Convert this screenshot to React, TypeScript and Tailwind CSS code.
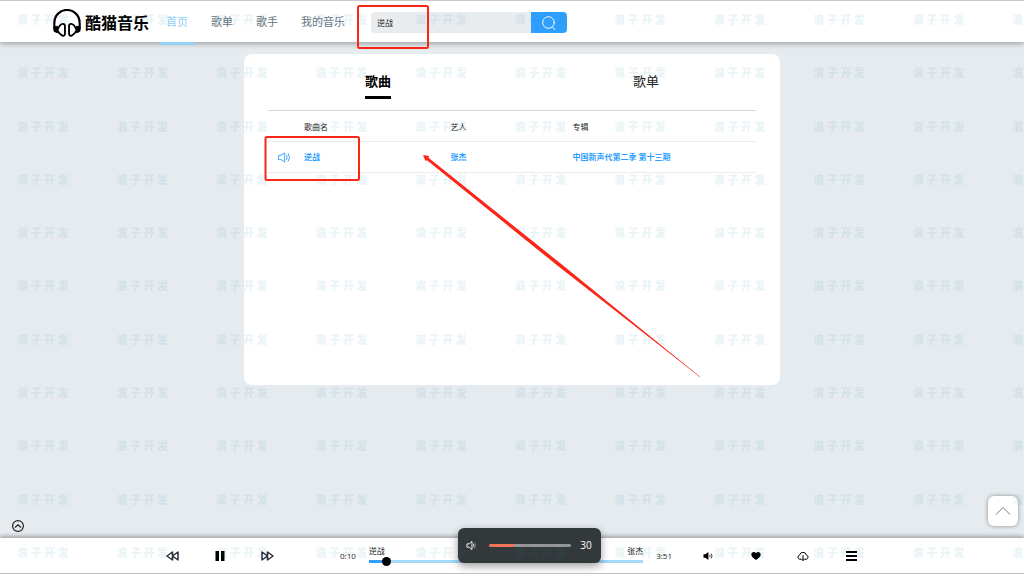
import { useState } from "react";
import type { ReactNode } from "react";

interface Song {
  id: number;
  name: string;
  artist: string;
  album: string;
}

const navItems = ["首页", "歌单", "歌手", "我的音乐"];

const songs: Song[] = [
  { id: 1, name: "逆战", artist: "张杰", album: "中国新声代第二季 第十三期" },
];

function Logo() {
  return (
    <svg viewBox="0 0 30 30" className="h-7 w-7" fill="none" stroke="#000" strokeLinejoin="round">
      <path d="M1.800 22C1.300 19 1.300 17 1.500 14.500A13.300 13.300 0 0 1 28.500 14.500C28.700 17 28.700 19 28.200 22" strokeWidth="2.300" />
      <path d="M0.800 19 4.800 18.500V25.500L1.200 24Z M29.200 19 25.200 18.500V25.500L28.800 24Z" fill="#000" />
      <path d="M5 22C6.500 18.500 8.500 16 10.500 16C12.200 16 12.800 17 12.800 18.500V26.500C12.800 28.500 11.500 29 10 28.500C7.800 27.500 6 25.500 5 23.500Z" strokeWidth="2" />
      <path d="M25 22C23.500 18.500 21.500 16 19.500 16C17.800 16 17.200 17 17.200 18.500V26.500C17.200 28.500 18.500 29 20 28.500C22.200 27.500 24 25.500 25 23.500Z" strokeWidth="2" />
    </svg>
  );
}

function SpeakerIcon({ className }: { className: string }) {
  return (
    <svg viewBox="0 0 14 12" className={className} fill="none" stroke="currentColor" strokeLinejoin="round" strokeLinecap="round">
      <path d="M1 3.700H3.200L7.200 1V11L3.200 8.300H1Z" />
      <path d="M9.300 3.800Q10.800 6 9.300 8.200M11.200 2Q14 6 11.200 10" />
    </svg>
  );
}

function IconButton({ label, children }: { label: string; children: ReactNode }) {
  return (
    <button aria-label={label} className="flex h-6 flex-1 cursor-pointer items-center justify-center text-black">
      {children}
    </button>
  );
}

function Header() {
  return (
    <header className="relative z-10 flex h-[41px] items-center bg-white pt-0.5 pl-[53px] shadow-[0_2px_5px_rgba(0,0,0,.3)]">
      {/* Logo */}
      <a href="#" className="flex shrink-0 items-center gap-1">
        <Logo />
        <span className="text-base font-bold text-black">酷猫音乐</span>
      </a>

      {/* Nav */}
      <nav className="ml-[11px] flex shrink-0 gap-[11px] self-stretch">
        {navItems.map((item, i) => (
          <a
            key={item}
            href="#"
            className={
              i === 0
                ? "-mb-[3px] flex items-center border-b-[3px] border-[#95d2f8] px-1.5 text-[11px] text-[#8fd0f8]"
                : "flex items-center px-1.5 text-[11px] text-[#67757f]"
            }
          >
            {item}
          </a>
        ))}
      </nav>

      {/* Search */}
      <form className="ml-5 flex h-[21px] w-[196px]" onSubmit={(e) => e.preventDefault()}>
        <input
          aria-label="搜索"
          defaultValue="逆战"
          className="min-w-0 flex-1 rounded-l-sm bg-[#e9ecef] px-1.5 text-[8px] text-[#222] outline-none"
        />
        <button
          aria-label="搜索"
          className="flex w-9 cursor-pointer items-center justify-center rounded-r-sm bg-[#2f9fff] text-white"
        >
          <svg viewBox="0 0 14 14" className="h-[14px] w-[14px]" fill="none" stroke="currentColor" strokeLinecap="round">
            <circle cx="6.500" cy="6.500" r="5.800" />
            <path d="M10.500 11.300 13 13.500" />
          </svg>
        </button>
      </form>
    </header>
  );
}

function SongTable() {
  return (
    <table className="w-full table-fixed border-t border-[#d6d6d6] text-left text-[8px]">
      <thead>
        <tr className="h-[31px] border-b border-[#ebebeb] text-[#222]">
          <th className="w-9" />
          <th className="w-[30%] pt-0.5 font-normal">歌曲名</th>
          <th className="w-[25%] pt-0.5 font-normal">艺人</th>
          <th className="pt-0.5 font-normal">专辑</th>
        </tr>
      </thead>
      <tbody>
        {songs.map((song) => (
          <tr key={song.id} className="h-[31px] border-b border-[#ebebeb] font-bold text-[#2f9fff]">
            <td className="pl-2.5">
              <SpeakerIcon className="h-[11px] w-[13px]" />
            </td>
            <td>{song.name}</td>
            <td>{song.artist}</td>
            <td>{song.album}</td>
          </tr>
        ))}
      </tbody>
    </table>
  );
}

function VolumePanel() {
  const [volume, setVolume] = useState(30);

  return (
    <div className="absolute bottom-2.5 left-[458px] z-20 flex h-[35px] w-[143px] items-center rounded-md bg-[#33383a] px-2 text-white shadow-[0_3px_8px_rgba(0,0,0,.4)]">
      <svg viewBox="0 0 12 12" className="h-[11px] w-[11px]" fill="none" stroke="currentColor" strokeLinejoin="round" strokeLinecap="round">
        <path d="M1.500 4.200H3.500L6.500 1.500V10.500L3.500 7.800H1.500Z M8.300 4.500Q9.400 6 8.300 7.500" />
        <path d="M9.500 3Q11.800 6 9.500 9" opacity=".4" />
      </svg>
      <input
        type="range"
        aria-label="音量"
        value={volume}
        onChange={(e) => setVolume(Number(e.target.value))}
        className="ml-3 h-[3px] w-[82px] cursor-pointer appearance-none rounded-full [&::-webkit-slider-thumb]:h-[3px] [&::-webkit-slider-thumb]:w-px [&::-webkit-slider-thumb]:appearance-none"
        style={{ background: `linear-gradient(to right, #f0745a ${volume}%, #949698 ${volume}%)` }}
      />
      <span className="flex-1 pl-2 text-center text-[10px]">{volume}</span>
    </div>
  );
}

function Player() {
  const [progress, setProgress] = useState(5);

  return (
    <footer className="relative z-10 border-b border-[#c4c0c4] bg-white shadow-[0_-2px_4px_rgba(0,0,0,.3)]">
      <button aria-label="收起" className="absolute -top-[18px] left-3 cursor-pointer text-[#222]">
        <svg viewBox="0 0 12 12" className="h-3 w-3" fill="none" stroke="currentColor" strokeWidth="1.200" strokeLinecap="round">
          <circle cx="6" cy="6" r="5.400" />
          <path d="M3.300 7.200 6 4.700 8.700 7.200" />
        </svg>
      </button>

      <div className="mx-auto flex h-[35px] max-w-[726px] items-center">
        {/* Playback */}
        <div className="flex w-[142px]">
          <IconButton label="上一首">
            <svg viewBox="0 0 13 10" className="h-2.5 w-[13px]" fill="none" stroke="#2b2f3a" strokeWidth="1.500" strokeLinejoin="round">
              <path d="M6.500 1V9L1 5ZM12 1V9L6.500 5Z" />
            </svg>
          </IconButton>
          <IconButton label="暂停">
            <svg viewBox="0 0 10 10" className="h-2.5 w-2.5" fill="currentColor">
              <path d="M0.500 0H4V10H0.500ZM6 0H9.500V10H6Z" />
            </svg>
          </IconButton>
          <IconButton label="下一首">
            <svg viewBox="0 0 13 10" className="h-2.5 w-[13px]" fill="none" stroke="#2b2f3a" strokeWidth="1.500" strokeLinejoin="round">
              <path d="M1 1V9L6.500 5ZM6.500 1V9L12 5Z" />
            </svg>
          </IconButton>
        </div>

        {/* Progress */}
        <div className="ml-[49px] flex flex-1 items-center gap-[13px] text-[8px] text-[#222]">
          <span>0:10</span>
          <div className="flex flex-1 flex-col">
            <div className="flex justify-between leading-3">
              <span>逆战</span>
              <span>张杰</span>
            </div>
            <input
              type="range"
              aria-label="播放进度"
              value={progress}
              onChange={(e) => setProgress(Number(e.target.value))}
              className="my-[3px] h-[3px] w-full cursor-pointer appearance-none [&::-webkit-slider-thumb]:h-[9px] [&::-webkit-slider-thumb]:w-[9px] [&::-webkit-slider-thumb]:appearance-none [&::-webkit-slider-thumb]:rounded-full [&::-webkit-slider-thumb]:bg-black"
              style={{ background: `linear-gradient(to right, #2f9fff ${progress}%, #a3d9fa ${progress}%)` }}
            />
          </div>
          <span>3:51</span>
        </div>

        {/* Actions */}
        <div className="ml-3 flex w-[191px]">
          <IconButton label="音量">
            <svg viewBox="0 0 10 8" className="h-2 w-2.5" fill="currentColor">
              <path d="M0.500 2.300H2.300L5.400 0V8L2.300 5.700H0.500Z" />
              <path d="M6.800 2.800Q7.600 4 6.800 5.200M8.200 1.500Q9.900 4 8.200 6.500" fill="none" stroke="currentColor" strokeWidth=".7" />
            </svg>
          </IconButton>
          <IconButton label="喜欢">
            <svg viewBox="0 0 10 8" className="h-2 w-2.5" fill="currentColor">
              <path d="M5 8C2 6 0.300 4.600 0.300 2.600C0.300 0 3.500-.8 5 1.100C6.500-.8 9.700 0 9.700 2.600C9.700 4.600 8 6 5 8Z" />
            </svg>
          </IconButton>
          <IconButton label="下载">
            <svg viewBox="0 0 12 10" className="h-2.5 w-3" fill="none" stroke="currentColor" strokeLinecap="round" strokeLinejoin="round">
              <path d="M3.800 8.300H2.800A2.200 2.200 0 0 1 2.600 4A3.500 3.500 0 0 1 9.400 4A2.200 2.200 0 0 1 9.200 8.300H8.200" />
              <path d="M6 4.500V9.400M4.500 8 6 9.500 7.500 8" />
            </svg>
          </IconButton>
          <IconButton label="播放列表">
            <svg viewBox="0 0 11 10" className="h-2.5 w-[11px]" fill="none" stroke="currentColor" strokeWidth="2">
              <path d="M0 1H11M0 5H11M0 9H11" />
            </svg>
          </IconButton>
        </div>
      </div>

      <VolumePanel />
    </footer>
  );
}

function Watermark() {
  return (
    <div
      aria-hidden="true"
      className="pointer-events-none absolute inset-0 z-30 flex flex-col justify-between overflow-hidden pt-2.5 pb-3.5 pl-[17px] text-[11px] leading-4 font-black text-[#1e8caa]/11"
    >
      {Array.from({ length: 11 }, (_, row) => (
        <div key={row} className="-mr-10 flex justify-between">
          {Array.from({ length: 11 }, (_, col) => (
            <span key={col} className="font-['Noto_Sans_CJK_SC',sans-serif] whitespace-nowrap">
              浪 子 开 发
            </span>
          ))}
        </div>
      ))}
    </div>
  );
}

// Red marker boxes and the pointer drawn over the page
function Annotations() {
  return (
    <svg
      aria-hidden="true"
      viewBox="0 1 1024 574"
      className="pointer-events-none absolute top-0 left-0 z-40 h-[574px] w-[1024px]"
      fill="none"
      stroke="#fb2618"
      strokeWidth="2"
    >
      <rect x="358" y="6" width="70" height="42" rx="1.500" />
      <rect x="265.500" y="137" width="93.500" height="43" rx="1.500" />
      <path d="M423 155 429 156 428.500 157.800 560 263 700 377 558 266 427 160.300 425.500 161Z" fill="#fb2618" stroke="none" />
      <path d="M560 264.500 700 377" strokeWidth=".6" />
    </svg>
  );
}

export default function App() {
  const [tab, setTab] = useState("歌曲");

  return (
    <div className="relative flex min-h-screen flex-col overflow-hidden border-t border-[#c8c8c8] bg-[#e6ebef] font-['Open_Sans','Noto_Sans_CJK_SC',sans-serif]">
      <Header />

      <main className="flex-1 pt-3">
        <section className="mx-auto min-h-[331px] w-full max-w-[536px] rounded-lg bg-white">
          {/* Tabs */}
          <div className="flex h-14 pt-[17px]">
            {["歌曲", "歌单"].map((name) => (
              <div key={name} className="flex flex-1 items-start justify-center">
                <button
                  onClick={() => setTab(name)}
                  className={
                    tab === name
                      ? "cursor-pointer border-b-[3px] border-black pb-[5px] text-[13px] leading-5 font-bold text-black"
                      : "cursor-pointer pb-[5px] text-[13px] leading-5 text-[#222]"
                  }
                >
                  {name}
                </button>
              </div>
            ))}
          </div>

          <div className="px-6">
            <SongTable />
          </div>
        </section>
      </main>

      {/* Back to top */}
      <button
        aria-label="返回顶部"
        className="absolute right-1.5 bottom-12 flex h-[30px] w-[30px] cursor-pointer items-center justify-center rounded-md bg-white text-[#666] shadow-[0_0_4px_rgba(0,0,0,.4)]"
      >
        <svg viewBox="0 0 16 10" className="h-2.5 w-4" fill="none" stroke="currentColor" strokeWidth=".9">
          <path d="M1 8.500 8 1.500 15 8.500" />
        </svg>
      </button>

      <Player />
      <Watermark />
      <Annotations />
    </div>
  );
}
